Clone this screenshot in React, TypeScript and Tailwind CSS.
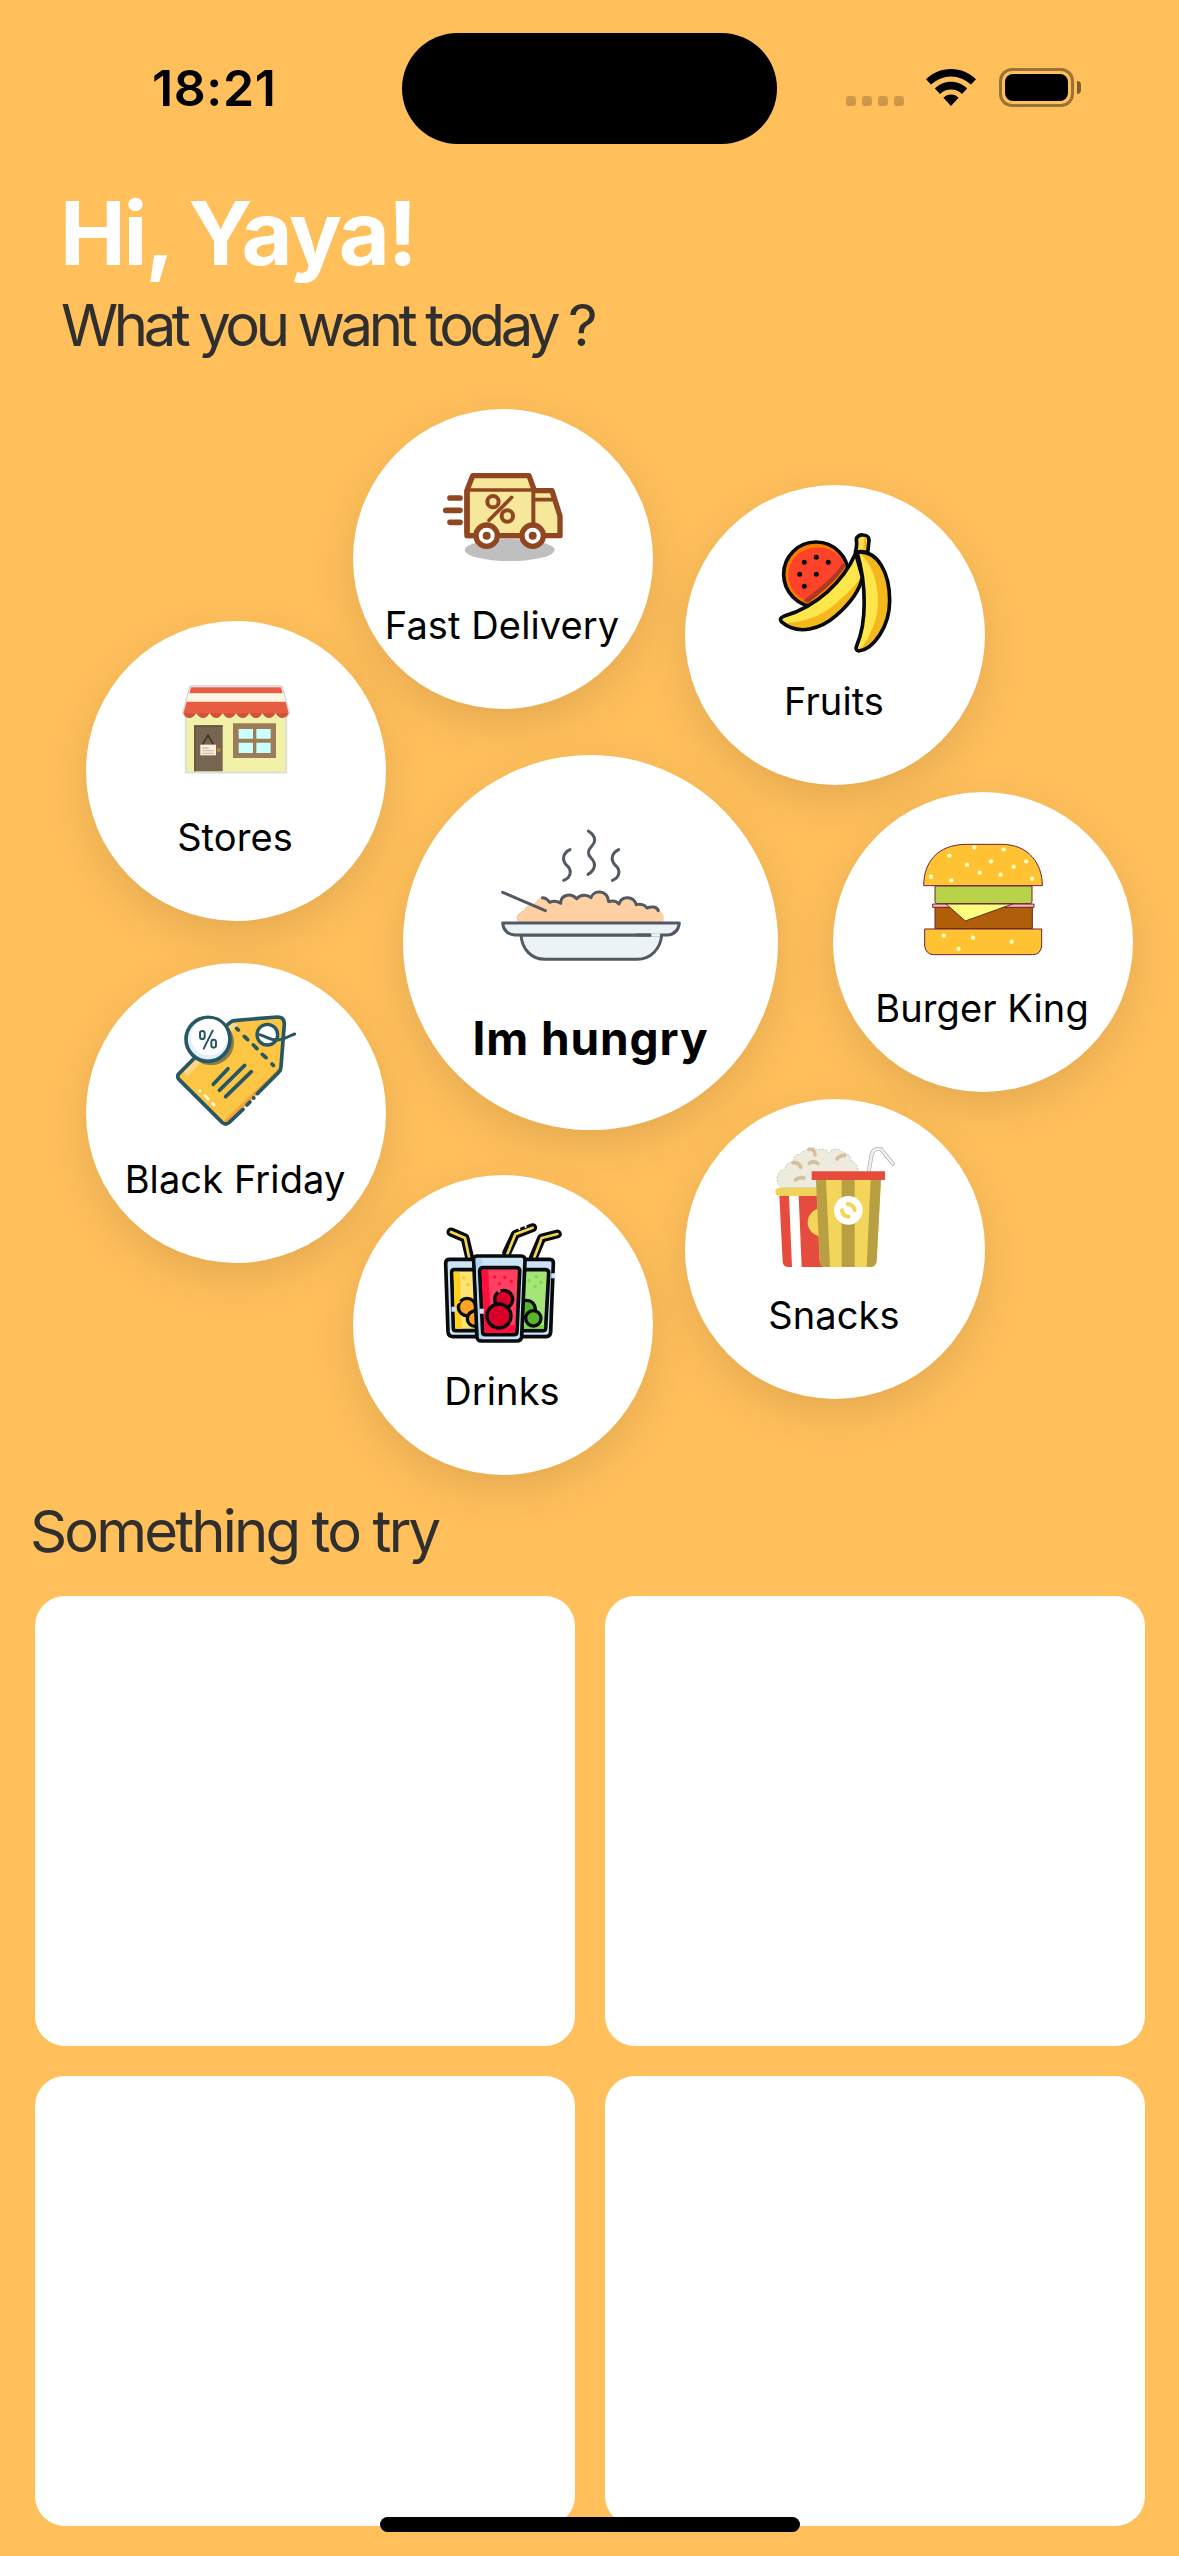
import type { ReactNode } from 'react';

function TruckIcon() {
  return (
    <svg viewBox="309 171 360 360" className="size-[120px]">
      <ellipse cx="509" cy="450" rx="135" ry="33" fill="#bfbfbf" />
      <g fill="#f6e79b" stroke="#8f4621" strokeWidth="16" strokeLinejoin="round">
        <path d="M381 271 398 227H567L583 271V272H636L660 348V407H381Z" />
        <path d="M381 270V398Q381 407 390 407H580" fill="none" />
      </g>
      <g fill="none" stroke="#8f4621" strokeLinecap="round">
        <path d="M381 270H636" strokeWidth="11" />
        <path d="M580 270V400" strokeWidth="12" />
        <path d="M583 299H640" strokeWidth="11" />
        <path d="M330 294H360M317 331H360M330 367H360" strokeWidth="17" />
        <circle cx="459" cy="305" r="17" strokeWidth="12" />
        <circle cx="502" cy="348" r="17" strokeWidth="12" />
        <path d="M515 292 447 361" strokeWidth="11" />
      </g>
      <g fill="#fff" stroke="#8f4621" strokeWidth="16">
        <circle cx="440" cy="407" r="32" />
        <circle cx="578" cy="407" r="32" />
      </g>
      <circle cx="440" cy="407" r="12" fill="#8f4621" />
      <circle cx="578" cy="407" r="12" fill="#8f4621" />
    </svg>
  );
}

function FruitsIcon() {
  return (
    <svg viewBox="315 189 360 360" className="size-[120px]">
      <circle cx="438" cy="313" r="97" fill="#ff7a00" stroke="#070b0b" strokeWidth="11" />
      <path d="M440 233A82 82 0 0 0 402 389C450 360 495 325 525 285A83 83 0 0 0 440 233Z" fill="#ff432a" />
      <path d="M400 392C450 352 495 318 518 278L528 287C500 330 455 368 414 399Z" fill="#ac3a22" />
      <g fill="#070b0b">
        <circle cx="403" cy="277" r="7.500" />
        <circle cx="439" cy="262" r="7.500" />
        <circle cx="475" cy="277" r="7.500" />
        <circle cx="389" cy="313" r="7.500" />
        <circle cx="439" cy="313" r="7.500" />
        <circle cx="403" cy="349" r="7.500" />
      </g>
      <path d="M557 250C520 335 440 410 341 439Q326 445 334 455C385 500 455 475 498 437C535 405 567 370 577 322Z" fill="#ffe64b" />
      <path d="M576 315C560 345 535 365 515 385C470 430 420 455 345 460C395 490 460 470 498 437C535 405 567 370 577 322Z" fill="#f5b81c" />
      <path d="M557 250C520 335 440 410 341 439Q326 445 334 455C385 500 455 475 498 437C535 405 567 370 577 322Z" fill="none" stroke="#070b0b" strokeWidth="11" strokeLinejoin="round" />
      <path d="M561 246C625 240 659 310 659 392C659 470 610 538 566 543Q555 541 560 527C590 460 590 345 561 246Z" fill="#ffe64b" />
      <path d="M572 252C625 300 640 410 605 480C594 507 580 530 566 540C610 538 656 470 656 392C656 310 625 245 572 252Z" fill="#f5b81c" />
      <path d="M561 246C625 240 659 310 659 392C659 470 610 538 566 543Q555 541 560 527C590 460 590 345 561 246Z" fill="none" stroke="#070b0b" strokeWidth="11" strokeLinejoin="round" />
      <path d="M556 247Q562 225 559 209C559 190 597 190 597 210L593 249Q575 242 556 247Z" fill="#fcdc45" stroke="#070b0b" strokeWidth="11" strokeLinejoin="round" />
      <path d="M583 203H589L587 238H580Z" fill="#f5b81c" />
    </svg>
  );
}

function StoreIcon() {
  return (
    <svg viewBox="318 178 360 360" className="size-[120px]">
      <path d="M347 310H649V489H347Z" fill="#f2f1a8" stroke="#dcdcdc" strokeWidth="5" />
      <path d="M360 229H636L658 309L650 322H346L338 309Z" fill="#fff" stroke="#d5d5d8" strokeWidth="4" />
      <path d="M350 312H647V325H350Z" fill="#f2f1a8" />
      <path
        d="M341 310Q344 325 359 325Q370 325 379 310Q387 325 399 325Q411 325 419 310Q427 325 439 325Q450 325 458 310Q466 325 478 325Q490 325 498 310Q506 325 518 325Q530 325 538 310Q546 325 558 325Q570 325 577 310Q585 325 597 325Q609 325 617 310Q625 325 637 325Q652 324 655 310Z"
        fill="#cd533c"
      />
      <path d="M363 233H633L638 251H358Z" fill="#e65d42" />
      <path d="M357 253H640L646 275H350Z" fill="#fff6e2" />
      <path d="M350 276H647L656 311H340Z" fill="#e65d42" />
      <path d="M372 347H458V485H372Z" fill="#766550" />
      <path d="M372 347H458V352H377V485H372Z" fill="#66563f" />
      <path d="M397 405 414 377 431 405" fill="none" stroke="#362d22" strokeWidth="4" />
      <path d="M391 405H438V437H391Z" fill="#ffeedd" />
      <path d="M397 415H416M397 423H432M397 431H432" stroke="#d0bda9" strokeWidth="4" />
      <circle cx="446" cy="421" r="6" fill="#b88c36" />
      <path d="M489 341H618V445H489Z" fill="#9d7d58" />
      <path d="M506 358H549V387H506ZM559 358H602V387H559ZM506 399H549V430H506ZM559 399H602V430H559Z" fill="#c9fffe" />
    </svg>
  );
}

function BurgerIcon() {
  const seeds = [
    [333, 290], [388, 227], [394, 301], [441, 254], [463, 202], [479, 278], [513, 244], [542, 284],
    [551, 208], [581, 260], [619, 244], [636, 296], [371, 467], [416, 507], [459, 473], [575, 485],
  ];
  return (
    <svg viewBox="309 180 360 360" className="size-[120px]">
      <g stroke="#6d2432" strokeWidth="3">
        <path d="M311 317C311 250 350 193 440 193H545C625 193 667 250 667 317Z" fill="#ffc233" />
        <path d="M345 318H636V364Q636 371 629 371H352Q345 371 345 364Z" fill="#b8d348" />
        <path d="M345 381H637V446H345Z" fill="#b05e0a" />
        <path d="M338 372H642V382H338Z" fill="#f3b6b0" />
        <path d="M378 372H578L436 423Z" fill="#fdff7d" />
        <path d="M314 447H665V498Q662 524 638 524H340Q317 522 314 498Z" fill="#ffc233" />
      </g>
      <g fill="#fdffc4">
        {seeds.map(([x, y]) => (
          <circle key={`${x}-${y}`} cx={x} cy={y} r="6.500" />
        ))}
      </g>
    </svg>
  );
}

function TagIcon() {
  return (
    <svg viewBox="318 183 360 360" className="size-[120px]">
      <path d="M323 380 475 222Q485 211 500 211L622 201Q643 201 643 222L633 350Q633 360 625 368L477 518Q467 526 457 518L327 388Q322 383 323 380Z" fill="#fcc644" />
      <path d="M338 364 352 378 505 224 485 217Z" fill="#ffd588" />
      <path d="M633 348 462 512 470 520 628 366Z" fill="#f0a23c" />
      <circle cx="423" cy="277" r="69" fill="#8b7c4b" />
      <path
        d="M519 478 477 518Q467 526 457 518L327 388Q319 379 327 371L475 222Q485 211 500 211L622 201Q643 201 643 222L633 350Q633 360 625 368L562 431"
        fill="none" stroke="#285764" strokeWidth="11" strokeLinecap="round" strokeLinejoin="round"
      />
      <path d="M540 456 531 465" stroke="#285764" strokeWidth="11" strokeLinecap="round" />
      <circle cx="551" cy="444" r="6" fill="#285764" />
      <path d="M500 235 505 240M523 259 533 269M550 285 561 296M577 313 588 323M606 342 610 346" fill="none" stroke="#285764" strokeWidth="11" strokeLinecap="round" />
      <path d="M474 356 430 403M524 346 448 421M544 365 467 440" stroke="#285764" strokeWidth="11" strokeLinecap="round" />
      <path d="M389 422 390 423M405 437 415 447M428 460 432 464" stroke="#fff4d4" strokeWidth="9" strokeLinecap="round" />
      <circle cx="592" cy="254" r="31" fill="#fff" stroke="#285764" strokeWidth="10" />
      <path d="M569 254C595 262 600 270 622 270C642 269 652 260 674 252" fill="none" stroke="#285764" strokeWidth="9" strokeLinecap="round" />
      <circle cx="414" cy="268" r="66" fill="#dff0fd" stroke="#285764" strokeWidth="11" />
      <circle cx="417" cy="261" r="55" fill="#fff" />
      <g fill="none" stroke="#285764" strokeWidth="6" strokeLinecap="round">
        <rect x="390" y="243" width="14" height="24" rx="7" />
        <rect x="424" y="269" width="14" height="24" rx="7" />
        <path d="M428 242 401 296" />
      </g>
    </svg>
  );
}

function DrinksIcon() {
  return (
    <svg viewBox="309 174 360 360" className="size-[120px]">
      <g fill="none" strokeLinecap="round" strokeLinejoin="round">
        <path d="M389 278 375 219 333 201M500 264 526 208 578 188M580 278 605 219 652 207" stroke="#070b0b" strokeWidth="27" />
        <path d="M389 285 375 219 333 201M500 272 526 208 578 188M580 285 605 219 652 207" stroke="#f6d84e" strokeWidth="8" />
        <path d="M537 188 538 193M556 181 557 186" stroke="#fff" strokeWidth="6" />
      </g>
      <g stroke="#070b0b" strokeWidth="11" strokeLinejoin="round">
        <path d="M329 283H410V515H338Q325 514 324 500L317 295Q317 283 329 283Z" fill="#cce3f8" />
        <path d="M540 283H629Q641 284 640 296L632 501Q631 514 618 515H540Z" fill="#cce3f8" />
        <path d="M343 314H410V497H347Q340 497 340 489L335 323Q335 314 343 314Z" fill="#ffe275" />
        <path d="M540 314H617Q627 315 626 325L617 489Q617 497 608 497H540Z" fill="#a5e477" />
      </g>
      <path d="M341 320H359L366 491H346Z" fill="#ffd31d" />
      <path d="M552 480H613L612 491H552Z" fill="#7ed845" />
      <g stroke="#070b0b" strokeWidth="10">
        <circle cx="381" cy="426" r="26" fill="#ffa327" />
        <circle cx="405" cy="461" r="23" fill="#ffa327" />
        <circle cx="560" cy="432" r="26" fill="#5ab42a" />
        <circle cx="580" cy="460" r="23" fill="#5ab42a" />
      </g>
      <path d="M411 273H543Q556 273 555 287L545 515Q543 528 530 528H424Q412 528 411 515L401 286Q400 274 411 273Z" fill="#cce3f8" stroke="#070b0b" strokeWidth="11" />
      <path d="M407 279H424L431 522H418Z" fill="#b0d2f4" />
      <path d="M428 308H530Q540 309 539 319L531 501Q531 509 522 509H436Q428 509 428 501L419 319Q419 309 428 308Z" fill="#ff4061" stroke="#070b0b" strokeWidth="11" />
      <path d="M425 315H445L452 480H527L525 503H434Z" fill="#ff0d3c" />
      <g stroke="#070b0b" strokeWidth="10">
        <circle cx="491" cy="403" r="27" fill="#d80027" />
        <circle cx="477" cy="453" r="36" fill="#d80027" />
      </g>
      <g fill="#ff0d3c">
        <circle cx="464" cy="336" r="5" />
        <circle cx="494" cy="337" r="5" />
        <circle cx="514" cy="349" r="5" />
        <circle cx="478" cy="356" r="5" />
      </g>
      <g fill="#ffc71c">
        <circle cx="371" cy="338" r="5" />
        <circle cx="384" cy="359" r="5" />
      </g>
      <g fill="#7ed845">
        <circle cx="567" cy="347" r="5" />
        <circle cx="589" cy="335" r="5" />
        <circle cx="602" cy="352" r="5" />
        <circle cx="585" cy="364" r="5" />
      </g>
      <path d="M472 378 481 375" stroke="#ff4061" strokeWidth="13" />
      <path d="M353 409 357 414" stroke="#ffd31d" strokeWidth="13" />
      <path d="M425 431V446M341 425V440M640 325V340" stroke="#cce3f8" strokeWidth="13" />
    </svg>
  );
}

function SnacksIcon() {
  return (
    <svg viewBox="315 171 360 360" className="size-[120px]">
      <path
        d="M337 293C320 285 317 258 327 249C330 239 342 240 346 238C345 222 362 216 369 216C370 198 383 191 390 193C398 180 410 182 414 179C425 168 438 173 440 182C453 174 471 177 477 188C489 172 510 175 517 188C532 188 545 199 543 212C556 216 563 227 565 246V293Z"
        fill="#edeade" stroke="#b5b5ad" strokeWidth="2" strokeDasharray="7 4"
      />
      <path d="M417 178Q435 176 435 195M370 218Q388 218 392 232M418 220Q430 210 444 221M501 207Q508 196 524 196M376 270Q386 260 402 264" fill="none" stroke="#d6c09c" strokeWidth="11" strokeLinecap="round" />
      <path d="M328 317H470V531H355Q339 530 338 515Z" fill="#e64c3d" />
      <path d="M357 317H386L395 531H366Z" fill="#fff" />
      <path d="M328 293H450V318H328Q316 317 316 305Q316 294 328 293Z" fill="#f0d25a" />
      <circle cx="455" cy="397" r="42" fill="#f3d55b" />
      <path d="M596 246 605 193Q611 174 632 177L669 221" fill="none" stroke="#a9acac" strokeWidth="12" strokeLinecap="round" strokeLinejoin="round" />
      <path d="M596 246 605 193Q611 174 632 177L669 221" fill="none" stroke="#edf0f0" strokeWidth="8" strokeLinecap="round" strokeLinejoin="round" />
      <path d="M438 268H633L620 513Q619 530 603 531H467Q450 530 449 513Z" fill="#f3d55b" />
      <path d="M438 268H468L480 531H467Q450 530 449 513ZM515 268H554V531H515ZM602 268H633L620 513Q619 530 603 531H590Z" fill="#b8a042" />
      <path d="M425 244H645V270H425Z" fill="#e64c3d" />
      <circle cx="535" cy="361" r="43" fill="#fff" />
      <path d="M533 342Q551 343 554 361M516 361Q519 379 536 380" fill="none" stroke="#f3d55b" strokeWidth="12" strokeLinecap="round" />
    </svg>
  );
}

function BowlIcon() {
  return (
    <svg viewBox="333 194 540 540" className="size-[180px]">
      <path
        d="M383 545C378 525 390 513 403 511C407 498 420 494 430 494C440 480 450 470 458 472C468 472 475 480 478 486C490 481 503 483 512 489C512 468 545 455 560 475C572 462 592 462 603 472C613 448 652 447 656 484C668 480 680 482 687 491C695 466 730 466 739 493C751 489 765 493 771 503C785 497 800 501 805 510C820 515 824 530 820 545Z"
        fill="#ffd0a4"
      />
      <g fill="none" stroke="#535963" strokeWidth="9" strokeLinecap="round" strokeLinejoin="round">
        <path d="M383 540C378 525 390 514 403 511C407 498 420 494 430 494" stroke="#c8b8aa" strokeWidth="2" />
        <path d="M457 472C468 472 475 480 479 486C490 481 503 483 512 489C512 465 540 455 560 475C572 462 592 462 603 472C610 448 652 447 656 484C668 480 680 482 687 491C695 466 730 466 739 493C751 489 765 493 771 503C785 497 800 499 805 511" />
        <path d="M338 456 466 511" />
        <path d="M595 272C613 283 621 300 606 316C592 331 591 341 603 353C621 370 614 391 594 402" />
        <path d="M540 328C520 338 514 357 529 374C548 389 543 412 521 420" />
        <path d="M686 328C666 338 660 357 675 374C694 389 689 412 667 420" />
        <path d="M393 584C396 628 425 657 465 657H742C782 657 812 625 815 584Z" fill="#ebf3f7" />
        <path d="M338 548H868Q864 582 832 584H374Q341 580 338 548Z" fill="#ebf3f7" />
      </g>
      <path d="M784 579H810V589H784Z" fill="#ebf3f7" />
      <path d="M740 584H778" stroke="#535963" strokeWidth="9" strokeLinecap="round" />
    </svg>
  );
}

const bubbles: { label: string; place: string; icon: ReactNode }[] = [
  { label: 'Burger King', place: 'left-[833px] top-[435px]', icon: <BurgerIcon /> },
  { label: 'Snacks', place: 'left-[685px] top-[742px]', icon: <SnacksIcon /> },
  { label: 'Drinks', place: 'left-[353px] top-[818px]', icon: <DrinksIcon /> },
  { label: 'Black Friday', place: 'left-[86px] top-[606px]', icon: <TagIcon /> },
  { label: 'Stores', place: 'left-[86px] top-[264px]', icon: <StoreIcon /> },
  { label: 'Fast Delivery', place: 'left-[353px] top-[52px]', icon: <TruckIcon /> },
  { label: 'Fruits', place: 'left-[685px] top-[128px]', icon: <FruitsIcon /> },
];

function StatusBar() {
  return (
    <header className="flex h-[189px] shrink-0 items-start">
      <div className="mt-[63px] w-[402px] pl-[152px] text-[50px] leading-[50px] font-semibold tracking-[0.6px] text-black">
        18:21
      </div>
      <div className="mt-[33px] h-[111px] w-[375px] rounded-full bg-black" />
      <div className="mt-[68px] ml-[69px] flex h-[39px] items-start">
        <div className="mt-[28px] flex gap-[6px]">
          {[0, 1, 2, 3].map((dot) => (
            <span key={dot} className="size-[10px] rounded-[3px] bg-black/20" />
          ))}
        </div>
        <svg viewBox="0 0 50 38" className="mt-px ml-[22px] h-[38px] w-[50px]">
          <path d="M25 0C34.700 0 43.600 3.800 50 10.300L45 15.600A29 29 0 0 0 5 15.600L0 10.300C6.400 3.800 15.300 0 25 0Z" />
          <path d="M25 12.700C31.200 12.700 36.900 15.300 41.200 19.600L36 25A16 16 0 0 0 14 25L8.800 19.600C13.100 15.300 18.800 12.700 25 12.700Z" />
          <path d="M25 25.500C28 25.500 30.700 26.700 32.600 28.800L25 37L17.400 28.800C19.300 26.700 22 25.500 25 25.500Z" />
        </svg>
        <div className="ml-[23px] h-[39px] w-[75px] rounded-[13px] border-3 border-black/40 p-[3px]">
          <div className="h-[27px] w-[63px] rounded-[8px] bg-black" />
        </div>
        <div className="mt-[13px] ml-[3px] h-[13px] w-[4px] rounded-r-full bg-black/50" />
      </div>
    </header>
  );
}

export default function App() {
  return (
    <div className="relative flex h-[2556px] w-[1179px] flex-col overflow-hidden bg-[#ffbf5b] font-['Inter',sans-serif]">
      <StatusBar />

      <div className="pl-[60px]">
        <h1 className="text-[88px] leading-[88px] font-bold tracking-[-2.2px] text-white">Hi, Yaya!</h1>
        <p className="mt-4 ml-px text-[58px] leading-[64px] tracking-[-4.4px] text-[#2f2f2f]">What you want today ?</p>
      </div>

      <section className="relative h-[1142px] shrink-0">
        {bubbles.map(({ label, place, icon }) => (
          <button
            key={label}
            className={`absolute flex size-[300px] flex-col items-center rounded-full bg-white pt-[48px] shadow-[0_15px_45px_rgba(0,0,0,0.11)] ${place}`}
          >
            {icon}
            <span className="mt-6 mr-[2px] text-[38px] leading-[48px] tracking-[0.1px] whitespace-nowrap text-black">{label}</span>
          </button>
        ))}
        <button className="absolute top-[398px] left-[403px] flex size-[375px] flex-col items-center rounded-full bg-white pt-[50px] shadow-[0_15px_45px_rgba(0,0,0,0.11)]">
          <BowlIcon />
          <span className="mt-[25px] text-[46px] leading-[56px] font-bold tracking-[0.9px] whitespace-nowrap text-black">
            Im hungry
          </span>
        </button>
      </section>

      <h2 className="pl-[30px] text-[58px] leading-[64px] tracking-[-2.85px] text-[#2f2f2f]">Something to try</h2>
      <div className="mt-[33px] grid grid-cols-2 gap-[30px] pr-[34px] pl-[35px]">
        {[0, 1, 2, 3].map((card) => (
          <div key={card} className="h-[450px] rounded-[30px] bg-white" />
        ))}
      </div>

      <div className="absolute bottom-[24px] left-[380px] h-[15px] w-[420px] rounded-full bg-black" />
    </div>
  );
}
